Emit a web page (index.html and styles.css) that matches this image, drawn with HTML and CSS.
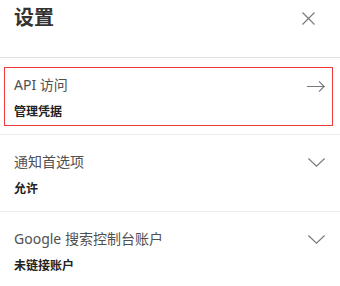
FILE: index.html
```html
<!DOCTYPE html>
<html lang="zh-CN">
<head>
<meta charset="utf-8">
<title>设置</title>
<link rel="stylesheet" href="styles.css">
</head>
<body>
<div class="panel">
  <div class="header">
    <h1 class="title">设置</h1>
    <svg class="close" width="13" height="13" viewBox="0 0 13 13"><path d="M0.5 0.5 L12.5 12.5 M12.5 0.5 L0.5 12.5" stroke="#777" stroke-width="1.1" fill="none"/></svg>
  </div>
  <div class="section">
    <div class="item focused">
      <div class="row">
        <span class="main">API 访问</span>
        <svg class="arrow" width="18" height="11" viewBox="0 0 18 11"><path d="M0 5.5 H17.2 M12 0.4 L17.2 5.5 L12 10.6" stroke="#777" stroke-width="1.1" fill="none"/></svg>
      </div>
      <div class="sub">管理凭据</div>
    </div>
  </div>
  <div class="section">
    <div class="item">
      <div class="row">
        <span class="main">通知首选项</span>
        <svg class="chev" width="17" height="9" viewBox="0 0 17 9"><path d="M0.4 0.5 L8.5 8.2 L16.6 0.5" stroke="#777" stroke-width="1.1" fill="none"/></svg>
      </div>
      <div class="sub">允许</div>
    </div>
  </div>
  <div class="section last">
    <div class="item">
      <div class="row">
        <span class="main">Google 搜索控制台账户</span>
        <svg class="chev" width="17" height="9" viewBox="0 0 17 9"><path d="M0.4 0.5 L8.5 8.2 L16.6 0.5" stroke="#777" stroke-width="1.1" fill="none"/></svg>
      </div>
      <div class="sub">未链接账户</div>
    </div>
  </div>
</div>
</body>
</html>
```

FILE: styles.css
```css
html, body {
  margin: 0;
  padding: 0;
  background: #ffffff;
}

body {
  font-family: "Noto Sans", "Noto Sans CJK SC", sans-serif;
  color: #333;
}

.panel {
  width: 340px;
}

.header {
  height: 57px;
  border-bottom: 1px solid #e1e1e1;
  display: flex;
  justify-content: space-between;
  align-items: flex-start;
  padding: 0 25px 0 14px;
}

.title {
  margin: 0;
  padding-top: 3px;
  font-size: 20px;
  line-height: 28px;
  font-weight: 700;
  color: #333;
  font-family: "Noto Sans CJK SC", sans-serif;
}

.close {
  margin-top: 12px;
  display: block;
}

.section {
  padding: 9px 7px 8px 4px;
  border-bottom: 1px solid #ebebeb;
}

.section.last {
  border-bottom: none;
}

.item {
  border: 1px solid transparent;
  height: 44px;
  padding: 7px 7px 6px 9px;
}

.item.focused {
  border-color: #f03a3a;
}

.row {
  display: flex;
  justify-content: space-between;
  align-items: center;
  height: 20px;
}

.main {
  font-size: 14px;
  line-height: 20px;
  color: #505050;
  font-weight: 400;
}

.arrow {
  display: block;
  margin-top: 3px;
}

.chev {
  display: block;
}

.sub {
  margin-top: 8px;
  font-size: 12px;
  line-height: 16px;
  font-weight: 700;
  color: #222;
  font-family: "Noto Sans CJK SC", sans-serif;
}
```
